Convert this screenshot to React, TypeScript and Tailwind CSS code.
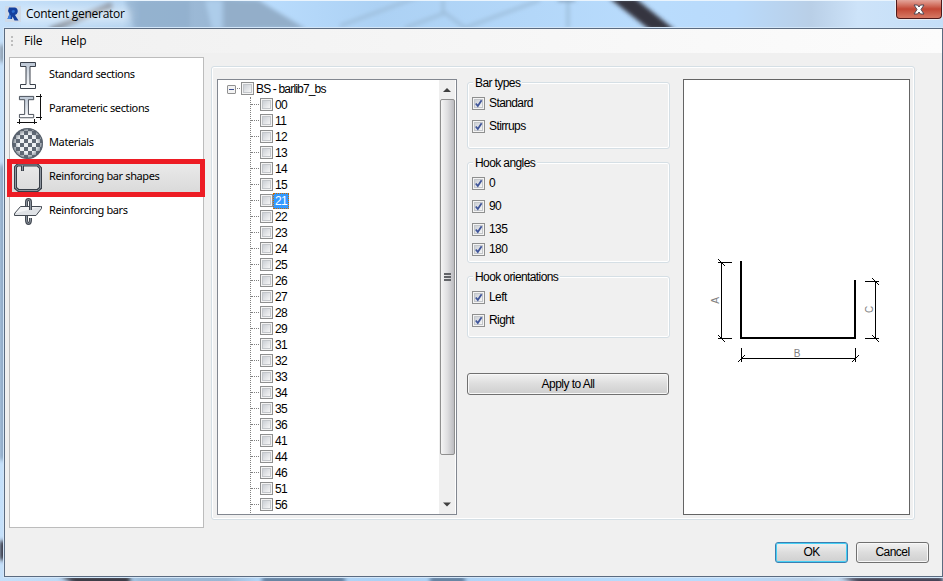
import type { ReactNode } from 'react';

const shapeCodes = [
  '00', '11', '12', '13', '14', '15', '21', '22', '23', '24', '25', '26', '27',
  '28', '29', '31', '32', '33', '34', '35', '36', '41', '44', '46', '51', '56',
];

function Backdrop() {
  return (
    <svg className="absolute inset-0" width="943" height="581">
      <defs>
        <linearGradient id="sky" x1="0" x2="1" y1="0" y2="0">
          <stop offset="0" stopColor="#c5e0fa" />
          <stop offset="0.13" stopColor="#b4d3f0" />
          <stop offset="0.15" stopColor="#9dbbd8" />
          <stop offset="0.24" stopColor="#9ab7d4" />
          <stop offset="0.28" stopColor="#b9dcfd" />
          <stop offset="0.4" stopColor="#acd1f4" />
          <stop offset="0.7" stopColor="#b9dcfd" />
          <stop offset="0.78" stopColor="#b9dafb" />
          <stop offset="0.86" stopColor="#b9cfe7" />
          <stop offset="0.91" stopColor="#cde3f9" />
          <stop offset="1" stopColor="#c4def8" />
        </linearGradient>
        <filter id="soft" x="-20%" y="-20%" width="140%" height="140%">
          <feGaussianBlur stdDeviation="2" />
        </filter>
        <filter id="softer" x="-30%" y="-50%" width="160%" height="200%">
          <feGaussianBlur stdDeviation="5" />
        </filter>
      </defs>
      <rect width="943" height="581" fill="url(#sky)" />
      <g filter="url(#soft)">
        <path d="M225 0H258L306 29H225Z" fill="#93aec9" />
        <path d="M125 0H190V29H135Z" fill="#8eacc9" opacity=".6" />
        <path d="M205 0H222V29H212Z" fill="#b5d5f3" opacity=".7" />
        <path d="M50 30L112 5" stroke="#858f9c" strokeWidth="6" />
        <path d="M340 26L442 -12M405 28L445 13L465 28L540 0M443 0V14M568 0V28" stroke="#9dbdda" strokeWidth="3" fill="none" />
        <path d="M558 0H575" stroke="#5f7286" strokeWidth="2" />
        <path d="M609 -2H635L675 30H650Z" fill="#35343f" />
        <path d="M0 165H5V460H0Z" fill="#829db9" />
        <path d="M0 45H5V62H0Z" fill="#8795a5" />
        <path d="M0 541H6V560H0Z" fill="#292833" />
        <path d="M60 576H130V584H75Z" fill="#37343e" />
        <path d="M262 576H345V584H262ZM430 576H465V584H430Z" fill="#64809f" />
        <path d="M840 577H943V584H860Z" fill="#373342" />
      </g>
      <rect x="18" y="8" width="112" height="14" fill="#fff" opacity=".45" filter="url(#softer)" />
      <path d="M0 .5H943" stroke="#eaf4fd" />
    </svg>
  );
}

function TitleBar() {
  return (
    <div className="flex h-[27px] items-start">
      <svg className="mt-[6px] ml-[5px]" width="16" height="16">
        <rect width="16" height="16" fill="#cfdae8" />
        <path d="M4 1.5H10Q13 2 12.7 6Q12.2 8.5 10 9L13.5 14.5H9.5L7.5 10.5L7 13H2.5L4.5 8L3 5Z" fill="#143f9e" />
        <path d="M6.5 5Q8.5 3 10 5Q10 7 7.5 7Z" fill="#2e6ed0" />
        <path d="M2.5 13L4.5 8L6 10L5.5 13Z" fill="#3e7fe0" />
      </svg>
      <span className="mt-[5px] ml-[5px] flex-1 text-[12px] leading-[18px] tracking-[-0.27px]">Content generator</span>
      <button className="mr-px flex h-[19px] w-[46px] items-center justify-center rounded-b-[4px] border border-t-0 border-[#4d1a1c] bg-linear-to-b from-[#e3a59b] via-[#c24735] via-50% to-[#d67864] shadow-[0_0_0_1px_#e9edf4]">
        <svg width="12" height="11" viewBox="0 0 12 11">
          <path d="M1 1H4.5L6 3L7.5 1H11L8 5.5L11 10H7.5L6 8L4.5 10H1L4 5.5Z" fill="#fff" stroke="#4f4753" />
        </svg>
      </button>
    </div>
  );
}

function MenuBar() {
  return (
    <div className="flex h-[24px] items-center bg-linear-to-r from-[#f0f0f0] to-[#fcfcfc] text-[12px] tracking-[-0.15px]">
      <div className="ml-[6px] flex flex-col gap-[2px]">
        <i className="size-[2px] bg-[#bdbdbd]" />
        <i className="size-[2px] bg-[#bdbdbd]" />
        <i className="size-[2px] bg-[#bdbdbd]" />
      </div>
      <span className="ml-[11px] w-[37px]">File</span>
      <span>Help</span>
    </div>
  );
}

function BeamShape() {
  return <path d="M1.5 .5H16.5V4.5H11V22.5H16.5V26.5H1.5V22.5H7V4.5H1.5Z" fill="url(#steel)" stroke="#3a414b" />;
}

const icons = {
  standard: (
    <svg width="36" height="34" viewBox="0 0 36 34">
      <defs>
        <linearGradient id="steel" x2="0" y2="1">
          <stop offset="0" stopColor="#bbc6d4" />
          <stop offset="1" stopColor="#fff" />
        </linearGradient>
      </defs>
      <g transform="translate(9 4)"><BeamShape /></g>
    </svg>
  ),
  parametric: (
    <svg width="36" height="34" viewBox="0 0 36 34">
      <g transform="translate(8 4) scale(.95 .82)"><BeamShape /></g>
      <path d="M26 4.5H32M26 25.5H32M30.5 2V28M7 30.5H27M9.5 27V32M24.5 27V32" stroke="#111" fill="none" />
    </svg>
  ),
  materials: (
    <svg width="36" height="34" viewBox="0 0 36 34">
      <defs>
        <pattern id="checks" width="8" height="8" patternUnits="userSpaceOnUse" patternTransform="translate(2 1)">
          <rect width="8" height="8" fill="#edf0f3" />
          <path d="M0 0H4V8H8V4H0Z" fill="#606975" />
        </pattern>
        <radialGradient id="ball">
          <stop offset=".6" stopColor="#66707c" stopOpacity="0" />
          <stop offset="1" stopColor="#4f5864" stopOpacity=".8" />
        </radialGradient>
      </defs>
      <circle cx="17.5" cy="17.5" r="15" fill="url(#checks)" stroke="#68707a" />
      <circle cx="17.5" cy="17.5" r="15.5" fill="url(#ball)" />
    </svg>
  ),
  shapes: (
    <svg width="36" height="34" viewBox="0 0 36 34">
      <path d="M12.5 11V5H7.500L5.500 7V28L8.500 30.500H27.500L30.500 28V8L27.500 5H12.500" fill="none" stroke="#383e47" strokeWidth="3" />
      <path d="M12.5 10.500V5H7.500L5.500 7V28L8.500 30.500H27.500L30.500 28V8L27.500 5H12.500" fill="none" stroke="#8d959f" />
    </svg>
  ),
  bars: (
    <svg width="36" height="34" viewBox="0 0 36 34">
      <path d="M16.500 20V26Q16.500 29.500 18.500 29.500Q20.500 29.500 20.500 26V24" fill="none" stroke="#444a53" strokeWidth="3" />
      <path d="M16.500 20V26Q16.500 29.500 18.500 29.500Q20.500 29.500 20.500 26V24" fill="none" stroke="#8b939d" />
      <path d="M10.500 12.500H31.500L26 19.500H4.500Z" fill="#f2f3f5" stroke="#444a53" />
      <path d="M4.500 19.500V21.500H26L31.500 14.500V12.500" fill="#dfe2e6" stroke="#444a53" />
      <path d="M16.500 12V8Q16.500 5.500 18.500 5.500Q20.500 5.500 20.500 8V16" fill="none" stroke="#444a53" strokeWidth="3" />
      <path d="M16.500 12V8Q16.500 5.500 18.500 5.500Q20.500 5.500 20.500 8V16" fill="none" stroke="#8b939d" />
    </svg>
  ),
};

function NavItem({ icon, label, active }: { icon: ReactNode; label: string; active?: boolean }) {
  return (
    <div className={active ? 'relative flex h-[34px] items-center bg-linear-to-b from-[#ececec] to-[#d9d9d9]' : 'flex h-[34px] items-center'}>
      {icon}
      <span className="-mt-px ml-[3px] text-[11px] tracking-[-0.38px]">{label}</span>
      {active && <div className="absolute -top-[1px] -left-[3px] h-[38px] w-[198px] border-5 border-[#ed1c24]" />}
    </div>
  );
}

function Checkbox({ checked }: { checked?: boolean }) {
  return (
    <span className="flex size-[13px] shrink-0 border border-[#8e8f8f] bg-[#f4f4f4] p-px">
      <svg className="size-[9px] overflow-visible border border-[#c3c6ca] bg-linear-to-br from-[#cbcfd5] to-[#f6f6f6]" viewBox="0 0 7 7">
        {checked && <path d="M.8 3.500L2.800 6L6.600 .3" fill="none" stroke="#40569a" strokeWidth="1.800" />}
      </svg>
    </span>
  );
}

function Tree() {
  return (
    <div className="flex h-[436px] w-[240px] border border-[#828790] bg-white">
      <div className="flex-1 overflow-hidden pt-px font-['Liberation_Sans',sans-serif] text-[12px] leading-[16px] tracking-[-0.6px]">
        <div className="flex h-[16px] items-center pb-px pl-[9px]">
          <span className="mt-[2px] flex size-[9px] items-center justify-center rounded-[1px] border border-[#919191] bg-[#f3f3f3]">
            <i className="h-px w-[5px] bg-[#3d4f91]" />
          </span>
          <i className="mx-px w-[3px] border-t border-dotted border-[#808080]" />
          <Checkbox />
          <span className="mt-px ml-[2px] tracking-[-0.83px] whitespace-nowrap">BS - barlib7_bs</span>
        </div>
        <div className="ml-[32px] border-l border-dotted border-[#808080]">
          {shapeCodes.map((code) => (
            <div key={code} className="flex h-[16px] items-center pb-px">
              <i className="mr-px w-[8px] border-t border-dotted border-[#808080]" />
              <Checkbox />
              <span
                className={
                  code === '21'
                    ? 'h-[16px] w-[16px] border border-dotted border-[#cc6a00] bg-[#3399ff] pl-px leading-[14px] text-white'
                    : 'mt-px pl-[2px]'
                }
              >
                {code}
              </span>
            </div>
          ))}
        </div>
      </div>
      <div className="mr-px flex w-[16px] flex-col items-center bg-[#efefef]">
        <svg width="16" height="19">
          <path d="M4 12L8 8L12 12Z" fill="#404040" />
        </svg>
        <div className="flex h-[356px] w-[15px] flex-col items-center justify-center gap-px rounded-[2px] border border-[#8f8f8f] bg-linear-to-r from-[#f5f5f5] via-[#dedee0] to-[#bcbcc0]">
          <i className="h-[2px] w-[7px] bg-[#626468]" />
          <i className="h-[2px] w-[7px] bg-[#626468]" />
          <i className="h-[2px] w-[7px] bg-[#626468]" />
        </div>
        <svg className="mt-auto" width="16" height="18">
          <path d="M4 6.500H12L8 10.500Z" fill="#404040" />
        </svg>
      </div>
    </div>
  );
}

function Group({ title, className, children }: { title: string; className: string; children: ReactNode }) {
  return (
    <div className={`w-[203px] rounded-[3px] border border-[#d5dfe5] shadow-[inset_0_0_0_1px_#fff] ${className}`}>
      <div className="-mt-[8px] ml-[5px] h-[16px] w-fit bg-[#f0f0f0] px-[2px] font-['Liberation_Sans',sans-serif] text-[12px] leading-[16px] tracking-[-0.6px]">
        {title}
      </div>
      {children}
    </div>
  );
}

function Option({ label, className }: { label: string; className?: string }) {
  return (
    <div className={`ml-[4px] flex h-[23px] items-center gap-[4px] ${className ?? ''}`}>
      <Checkbox checked />
      <span className="-mt-px font-['Liberation_Sans',sans-serif] text-[12px] leading-[14px] tracking-[-0.6px]">{label}</span>
    </div>
  );
}

function ShapePreview() {
  return (
    <div className="h-[436px] w-[227px] border border-[#646464] bg-white">
      <svg width="225" height="434" viewBox="684 80 225 434">
        <path d="M741 261V338H855V280" fill="none" stroke="#000" strokeWidth="2" shapeRendering="crispEdges" />
        <path
          d="M721.5 262V339M718 262.500H732M718 338.500H732M875.500 281V339M865 281.500H879M865 338.500H879M741 358.500H856M741.500 348V362M855.500 348V362"
          fill="none"
          stroke="#000"
          shapeRendering="crispEdges"
        />
        <path d="M718 259L725 266M718 335L725 342M872 278L879 285M872 335L879 342M738 362L745 355M852 362L859 355" stroke="#000" />
        <g className="font-['Liberation_Sans',sans-serif] text-[10px]" fill="#808080" textAnchor="middle">
          <text transform="translate(719 300.500) rotate(-90)">A</text>
          <text x="797" y="357">B</text>
          <text transform="translate(873 309.500) rotate(-90)">C</text>
        </g>
      </svg>
    </div>
  );
}

function Button({ children, className }: { children: string; className: string }) {
  return (
    <button
      className={`flex items-center justify-center rounded-[3px] border bg-linear-to-b from-[#f2f2f2] via-[#dddddd] via-50% to-[#cfcfcf] font-['Liberation_Sans',sans-serif] text-[12px] tracking-[-0.55px] ${className}`}
    >
      {children}
    </button>
  );
}

export default function App() {
  return (
    <div className="relative h-[581px] w-[943px] overflow-hidden font-['Open_Sans','Noto_Sans',sans-serif] text-black">
      <Backdrop />
      <div className="relative flex h-full flex-col">
        <TitleBar />
        <div className="mt-px ml-[4px] flex h-[549px] w-[939px] flex-col border border-[#5b6b80] bg-[#f0f0f0] shadow-[0_0_0_1px_#d3e6f8]">
          <MenuBar />
          <div className="flex pl-[4px]">
            <nav className="mt-[4px] h-[471px] w-[195px] border border-[#bcbcbc] bg-white font-['Noto_Sans',sans-serif]">
              <NavItem icon={icons.standard} label="Standard sections" />
              <NavItem icon={icons.parametric} label="Parameteric sections" />
              <NavItem icon={icons.materials} label="Materials" />
              <NavItem icon={icons.shapes} label="Reinforcing bar shapes" active />
              <NavItem icon={icons.bars} label="Reinforcing bars" />
            </nav>
            <main className="mt-[13px] ml-[7px] flex h-[454px] w-[704px] rounded-[3px] border border-[#d5dfe5] pt-[12px] pl-[5px] shadow-[inset_0_0_0_1px_#fff]">
              <Tree />
              <div className="ml-[10px] w-[202px] pt-[3px]">
                <Group title="Bar types" className="h-[67px]">
                  <Option label="Standard" className="mt-px" />
                  <Option label="Stirrups" />
                </Group>
                <Group title="Hook angles" className="mt-[13px] h-[101px]">
                  <Option label="0" className="mt-px" />
                  <Option label="90" />
                  <Option label="135" />
                  <Option label="180" className="-mt-[3px]" />
                </Group>
                <Group title="Hook orientations" className="mt-[13px] h-[62px]">
                  <Option label="Left" className="mt-px" />
                  <Option label="Right" />
                </Group>
                <Button className="mt-[35px] h-[22px] w-[202px] border-[#707070] shadow-[inset_0_0_0_1px_#f8f8f8]">Apply to All</Button>
              </div>
              <div className="ml-[14px]">
                <ShapePreview />
              </div>
            </main>
          </div>
          <footer className="mt-[14px] flex justify-end gap-[8px] pr-[13px]">
            <Button className="h-[21px] w-[73px] border-[#3c7fb1] pb-px shadow-[inset_0_0_0_1px_#46d0f5]">OK</Button>
            <Button className="h-[21px] w-[73px] border-[#707070] pb-px shadow-[inset_0_0_0_1px_#f8f8f8]">Cancel</Button>
          </footer>
        </div>
      </div>
    </div>
  );
}
